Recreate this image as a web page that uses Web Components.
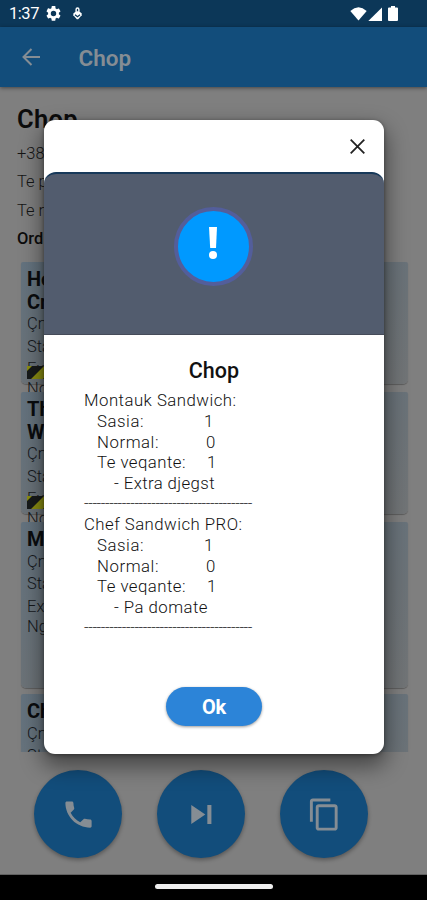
<!DOCTYPE html>
<html lang="sq">
<head>
<meta charset="utf-8">
<title>Chop</title>
<style>
html,body{margin:0;height:900px;overflow:hidden;background:#7f7f7f}
body{font-family:Roboto,"Liberation Sans",sans-serif;color:#0c0c0c}
</style>
</head>
<body>
<chop-app></chop-app>
<script>
const define = (name, html, ready) => customElements.define(name, class extends HTMLElement {
  connectedCallback() {
    if (this.shadowRoot) return;
    const t = document.createElement('template');
    t.innerHTML = html;
    this.attachShadow({mode: 'open'}).append(t.content.cloneNode(true));
    if (ready) ready(this);
  }
});

// A line of text whose tracking is adjusted to fill the width in "w".
define('fit-text', `<style>:host{display:block;white-space:pre;width:max-content}span{display:inline-block}</style><span><slot></slot></span>`, el => {
  const s = el.shadowRoot.querySelector('span');
  const w = parseFloat(el.getAttribute('w'));
  const n = el.textContent.length;
  if (w && n) s.style.letterSpacing = ((w - s.getBoundingClientRect().width) / n) + 'px';
});

define('status-bar', `<style>
:host{display:flex;align-items:center;box-sizing:border-box;height:27px;flex:none;padding:0 29px 0 9px;background:#0c3758;color:#fff;font-size:16.5px}
svg{fill:#fff;display:block}.gap{flex:1}.g{margin-left:7px}.d{margin-left:9px}.s{margin-left:1px}.b{margin-left:6px}
</style><fit-text w="30">1:37</fit-text>
<svg class="g" width="15" height="15" viewBox="2 2 20 20"><path d="M19.14 12.94c.04-.3.06-.61.06-.94s-.02-.64-.07-.94l2.03-1.58a.49.49 0 0 0 .12-.61l-1.92-3.32a.49.49 0 0 0-.59-.22l-2.39.96c-.5-.38-1.03-.7-1.62-.94l-.36-2.54A.48.48 0 0 0 13.92 2h-3.84a.48.48 0 0 0-.47.41l-.36 2.54c-.59.24-1.13.57-1.62.94l-2.39-.96a.48.48 0 0 0-.59.22L2.74 8.87a.48.48 0 0 0 .12.61l2.03 1.58c-.05.3-.09.63-.09.94s.02.64.07.94l-2.03 1.58a.49.49 0 0 0-.12.61l1.92 3.32c.12.22.37.29.59.22l2.39-.96c.5.38 1.03.7 1.62.94l.36 2.54c.05.24.24.41.48.41h3.84c.24 0 .44-.17.47-.41l.36-2.54c.59-.24 1.13-.56 1.62-.94l2.39.96c.22.08.47 0 .59-.22l1.92-3.32a.48.48 0 0 0-.12-.61zM12 15.6a3.6 3.6 0 1 1 0-7.2 3.6 3.6 0 0 1 0 7.2z"/></svg>
<svg class="d" width="15" height="13" viewBox="0 0 15 14"><path d="M6 5V2.6a1.5 1.5 0 0 1 3 0V5" fill="none" stroke="#fff" stroke-width="1.5"/><path d="M6 4.6h3l3 2.2v2L8.2 13.2H6.8L3 9V7z"/><path d="M4.8 8.4l2.7 2 2.7-2" fill="none" stroke="#0c3758" stroke-width="1.4"/></svg>
<span class="gap"></span>
<svg width="17" height="14" viewBox="0 0 17 14"><path d="M.3 4Q8.5-3.4 16.7 4L8.5 13.6z"/></svg>
<svg class="s" width="14" height="14" viewBox="0 0 14 14"><path d="M14 .5V14H.3z"/></svg>
<svg class="b" width="10" height="15" viewBox="0 0 10 15"><path d="M3 0h4v1.4h2A1 1 0 0 1 10 2.4V14a1 1 0 0 1-1 1H1a1 1 0 0 1-1-1V2.4a1 1 0 0 1 1-1h2z"/></svg>`);

define('app-bar', `<style>
:host{display:flex;align-items:center;height:60px;flex:none;box-sizing:border-box;padding-left:22px;background:#124d7b;color:#858d94;font-weight:600;font-size:22.5px;box-shadow:0 1px 4px #0007;position:relative}
svg{display:block;margin-right:38.5px}fit-text{padding-top:1px}
</style><svg width="18" height="18" viewBox="0 0 18 18" fill="none" stroke="#858d94" stroke-width="2"><path d="M18 9H2M9.5 1L1.5 9l8 8"/></svg><fit-text w="51"><slot></slot></fit-text>`);

define('order-card', `<style>
:host{display:block;box-sizing:border-box;flex:none;height:122px;margin-bottom:8px;padding:6px 6px 0;border-radius:2px 2px 5px 5px;background:linear-gradient(165deg,#64737f,#6c7378 60%,#727577);box-shadow:0 1px 1px #0004;font-size:16.5px;line-height:22.6px;font-weight:300;color:#15181b;white-space:nowrap;position:relative}
:host([tall]){height:166px;margin-bottom:6px}
b{display:block;font-size:20px;font-weight:700;color:#0a0c0e;line-height:22.5px}
.n{line-height:20px;height:20px;margin-top:-1px}
:host([over]) .n{margin-top:-2px}
svg{display:none;position:absolute;left:6px;top:104px}:host([over]) svg{display:block}
</style><b><slot></slot></b><div>Çm</div><div>Sta</div><div class="o">Ex</div><div class="n">Ng</div>
<svg width="20" height="13" viewBox="0 0 20 13"><path fill="#8b8e12" d="M0 0h20v13H0z"/><path fill="#171a1a" d="M0 5L5 0h12L4 13H0zM16 13l4-4v4z"/></svg>`);

define('round-button', `<style>:host{display:grid;place-items:center;width:88px;height:88px;border-radius:50%;background:#124d7b;box-shadow:0 2px 4px #0005}svg{display:block;fill:#858d94;width:35px;height:35px;overflow:visible}</style>
<svg viewBox="0 0 24 24"><path/></svg>`, el => {
  el.shadowRoot.querySelector('path').setAttribute('d', {
    call: 'M6.62 10.79c1.44 2.83 3.76 5.14 6.59 6.59l2.2-2.2c.27-.27.67-.36 1.02-.24 1.12.37 2.33.57 3.57.57.55 0 1 .45 1 1V20c0 .55-.45 1-1 1C10.61 21 3 13.39 3 4c0-.55.45-1 1-1h3.5c.55 0 1 .45 1 1 0 1.25.2 2.45.57 3.57.11.35.03.74-.25 1.02z',
    next: 'M5 18.5l9.6-6.5L5 5.5zM16 5.5v13h2.8v-13z',
    copy: 'M16 1H4C2.9 1 2 1.9 2 3v14h2V3h12zM19 5H8C6.9 5 6 5.9 6 7v14c0 1.1.9 2 2 2h11c1.1 0 2-.9 2-2V7c0-1.1-.9-2-2-2zm0 16H8V7h11z'
  }[el.getAttribute('icon')]);
});

define('order-line', `<style>
:host{display:block;font-size:16.8px;line-height:20.67px;font-weight:300;color:#111}
.r{display:flex;padding-left:13px}.r>:first-child{width:107px}
.r.z>:first-child{width:109px}.r.v>:first-child{width:110px}
.x{padding-left:30px}.d{color:#333;font-size:16px}
</style><fit-text class="name"></fit-text>
<div class="r"><span><fit-text w="47">Sasia:</fit-text></span><span>1</span></div>
<div class="r z"><span><fit-text w="62">Normal:</fit-text></span><span>0</span></div>
<div class="r v"><span><fit-text w="89">Te veqante:</fit-text></span><span>1</span></div>
<fit-text class="x"></fit-text>
<fit-text class="d" w="168">----------------------------------------</fit-text>`, el => {
  for (const [c, a] of [['name', 'name'], ['x', 'extra']]) {
    const old = el.shadowRoot.querySelector('.' + c);
    const [text, w] = el.getAttribute(a).split('|');
    const f = document.createElement('fit-text');
    f.className = c; f.textContent = text; f.setAttribute('w', w);
    old.replaceWith(f);
  }
});

define('alert-dialog', `<style>
:host{position:absolute;left:44px;top:120px;width:340px;height:634px;border-radius:11px;background:#fff;display:flex;flex-direction:column;box-shadow:0 10px 22px 2px #0007,0 1px 4px #0006}
.top{height:52px;flex:none;display:flex;justify-content:flex-end;align-items:center;padding-right:19px}
.hero{height:163px;flex:none;box-sizing:border-box;border-top:2px solid #17395a;border-bottom:1px solid #454b59;border-radius:12px 12px 0 0;background:#525c6e;display:grid;place-items:center;padding:0 2px 16px 0}
.dot{width:71px;height:71px;border:4.5px solid #535e9b;border-radius:50%;background:#0099ff;display:grid;place-items:center}
.dot svg{margin-top:-6px}
.body{flex:1;display:flex;flex-direction:column;padding:23px 40px 28px}
h2{margin:0 0 6.4px 0;align-self:center;font-size:21.5px;line-height:26px;font-weight:500;color:#111}
.ok{margin:auto auto 0;width:96px;height:39px;border-radius:20px;background:#2c84d8;color:#fff;font-weight:700;font-size:20px;display:grid;place-items:center;box-shadow:0 1px 3px #0006}
svg{display:block}
</style><div class="top"><svg width="15" height="15" viewBox="0 0 15 15" stroke="#222" stroke-width="1.8"><path d="M.7.7l13.6 13.6M14.3.7L.7 14.3"/></svg></div>
<div class="hero"><div class="dot"><svg width="10" height="33" viewBox="0 0 10 33" fill="#fff"><path d="M1 0h8L8 21H2.2z"/><circle cx="5" cy="28" r="4"/></svg></div></div>
<div class="body"><h2><fit-text w="50.5">Chop</fit-text></h2><slot></slot><div class="ok"><fit-text w="24">Ok</fit-text></div></div>`);

define('chop-app', `<style>
:host{display:flex;flex-direction:column;width:427px;height:900px;background:#7f7f7f;position:relative;overflow:hidden}
.info{height:175px;flex:none;box-sizing:border-box;padding:17px 17px 0;font-size:16.5px;line-height:28.5px;color:#151515;font-weight:300}
h1{margin:0 0 5.5px;font-size:25.5px;line-height:30px;font-weight:600;color:#0c0c0c}
.ord{font-weight:500;color:#0c0c0c}
.list{height:490px;flex:none;overflow:hidden;padding:0 19px 0 21px;display:flex;flex-direction:column}
.actions{display:flex;gap:35px;padding:18px 34px 0;flex:1}
.nav{height:25px;flex:none;background:#000;border-top:1px solid #606060;display:flex;justify-content:center}
.nav i{width:118px;height:5px;border-radius:3px;background:#eee;margin-top:9px}
</style><status-bar></status-bar><app-bar>Chop</app-bar>
<div class="info"><h1><fit-text w="61">Chop</fit-text></h1><div>+38</div><div>Te p</div><div>Te n</div><div class="ord">Ord</div></div>
<div class="list"><order-card over>Ho<br>Cr</order-card><order-card over>Th<br>W</order-card><order-card tall>M</order-card><order-card tall>Ch</order-card></div>
<div class="actions"><round-button icon="call"></round-button><round-button icon="next"></round-button><round-button icon="copy"></round-button></div>
<div class="nav"><i></i></div>
<alert-dialog><order-line name="Montauk Sandwich:|152.5" extra="- Extra djegst|101"></order-line><order-line name="Chef Sandwich PRO:|158.5" extra="- Pa domate|94"></order-line></alert-dialog>`);
</script>
</body>
</html>
